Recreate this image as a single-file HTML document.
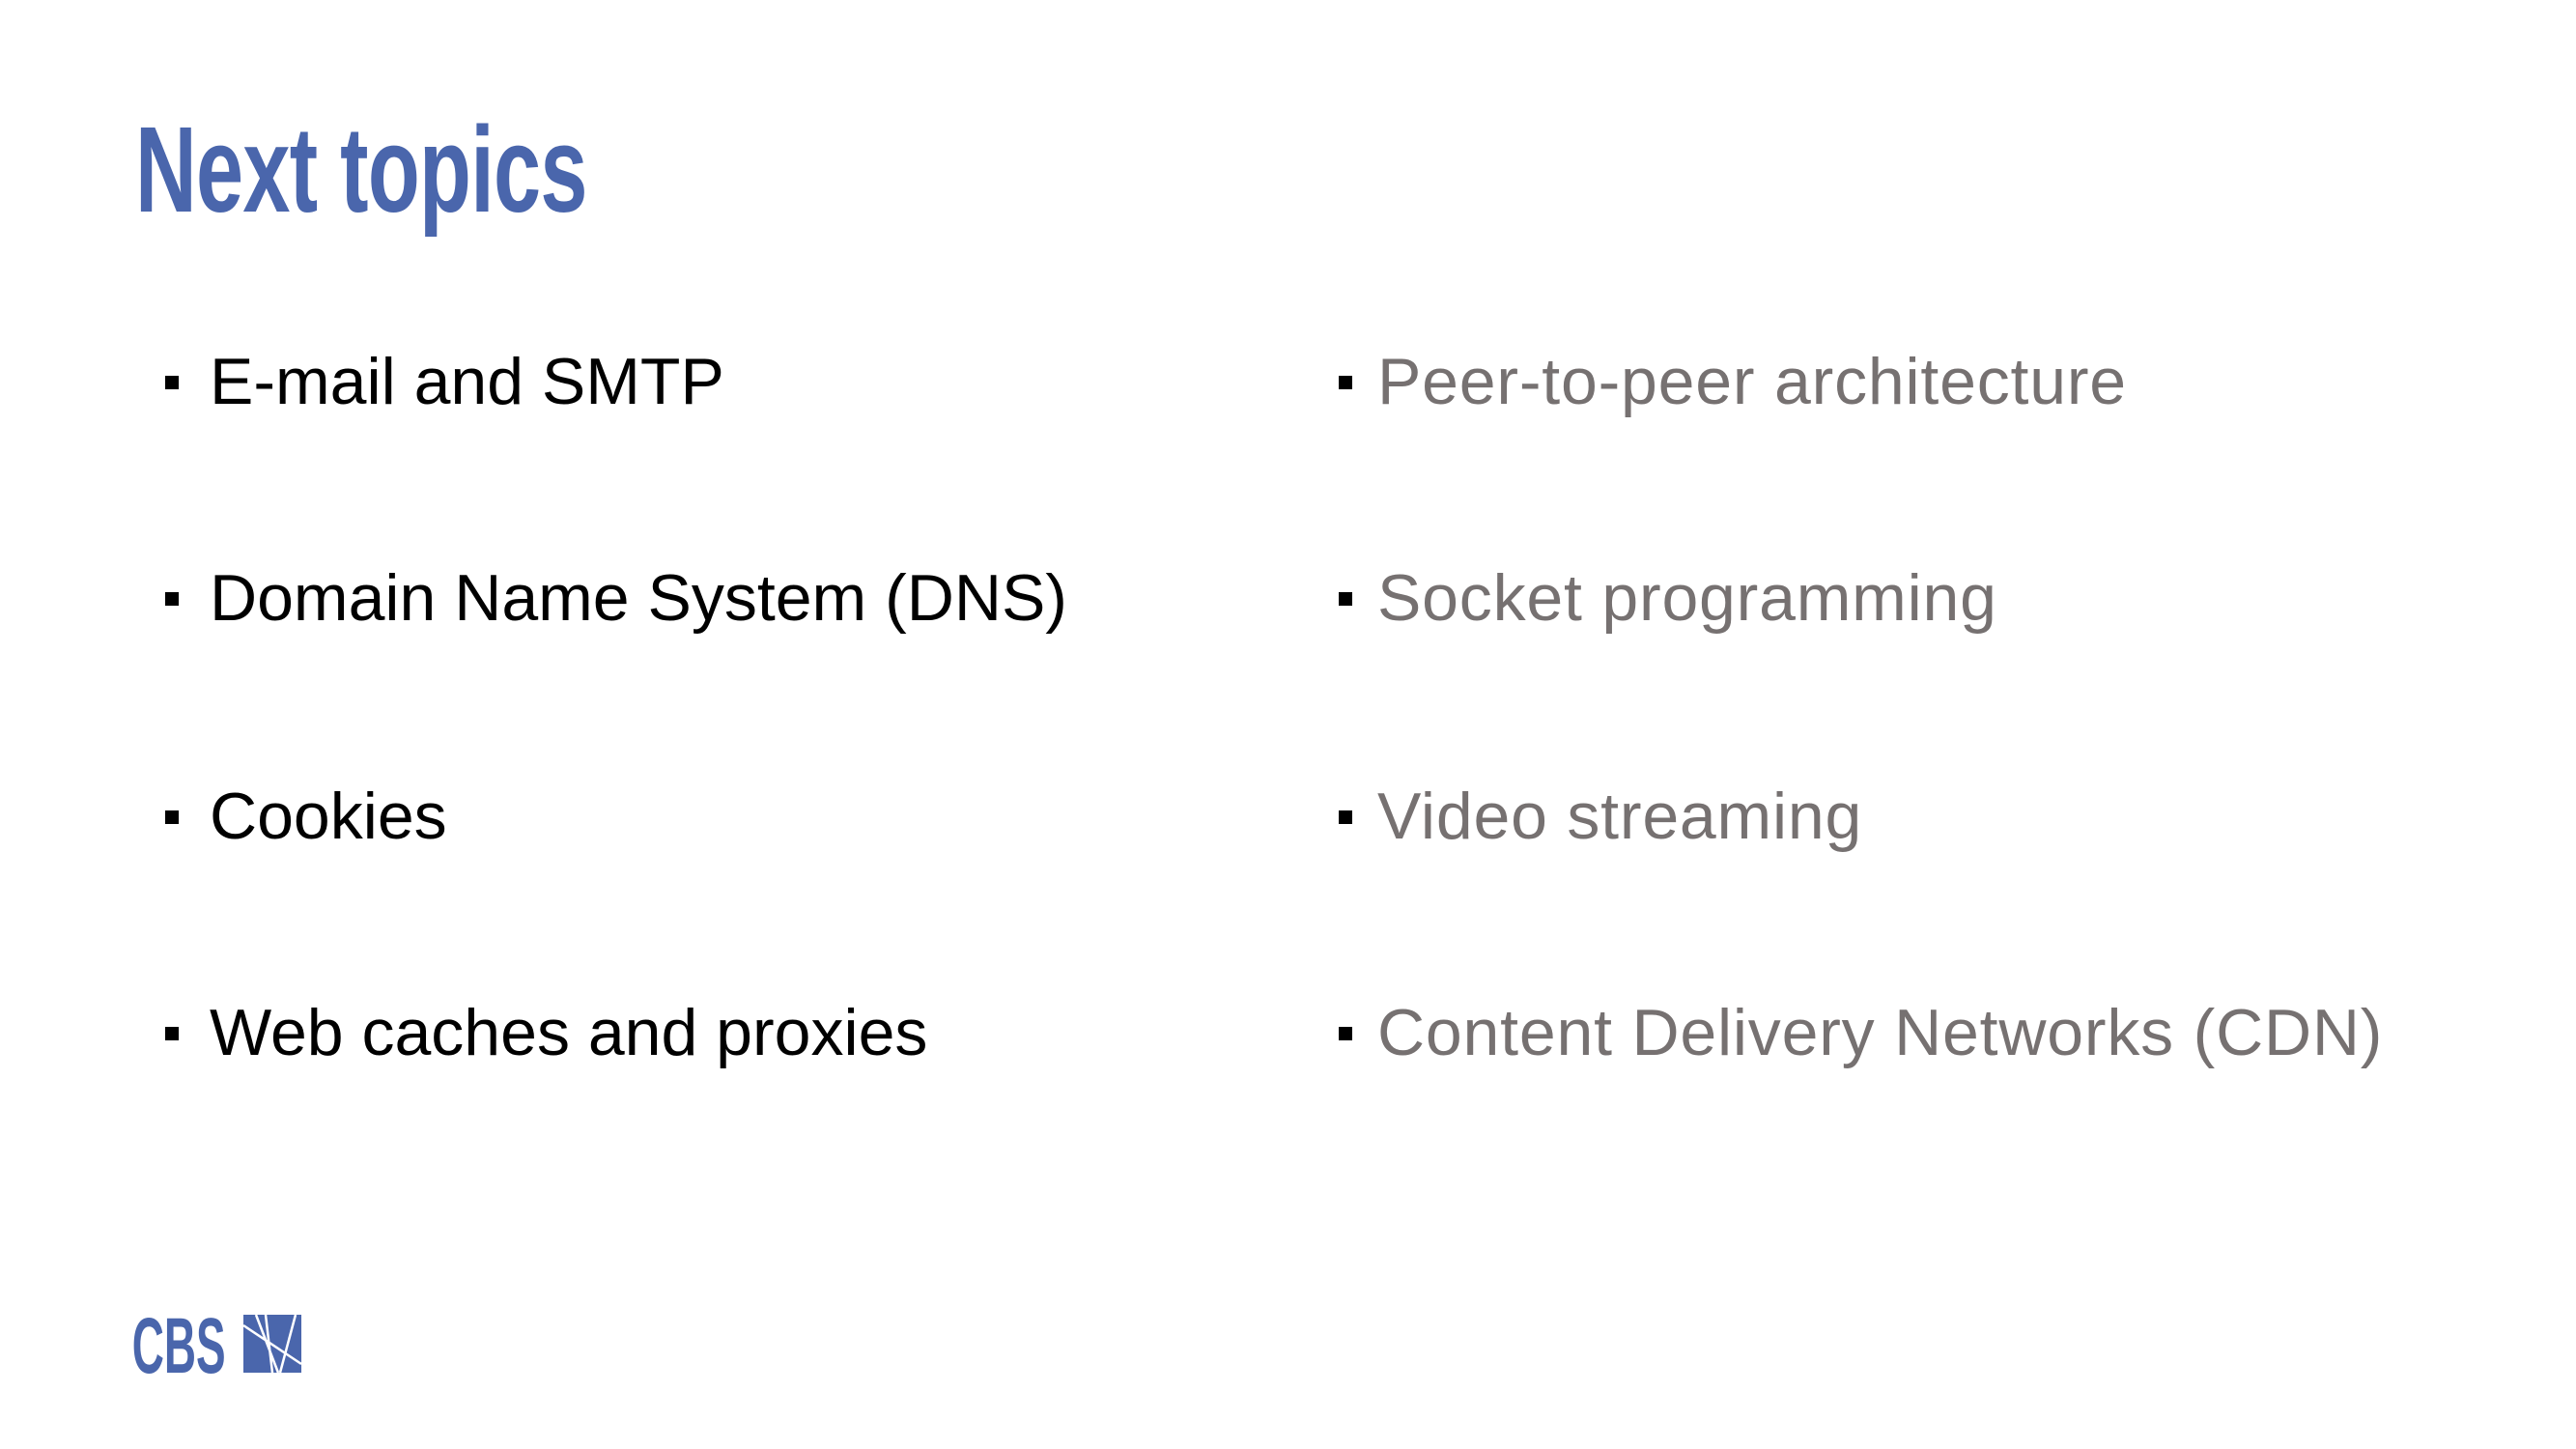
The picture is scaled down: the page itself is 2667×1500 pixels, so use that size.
<!DOCTYPE html>
<html><head><meta charset="utf-8"><style>
html,body{margin:0;padding:0;background:#fff;}
body{width:2667px;height:1500px;position:relative;overflow:hidden;font-family:"Liberation Sans",sans-serif;}
.t{position:absolute;left:140px;top:113px;font-size:126px;font-weight:bold;color:#4a66ac;transform:scaleX(0.7);transform-origin:left top;letter-spacing:-1px;line-height:1;}
.i{position:absolute;font-size:68px;line-height:1;white-space:nowrap;letter-spacing:0;}
.i:before{content:"";position:absolute;left:-46px;top:28px;width:14px;height:14px;background:currentColor;}
.l{left:217px;color:#000;}
.r{left:1426px;color:#767171;letter-spacing:0.8px;}
.r:before{background:#000;left:-40px;}
</style></head><body>
<div class="t">Next topics</div>
<div class="i l" style="top:361px">E-mail and SMTP</div>
<div class="i l" style="top:585px">Domain Name System (DNS)</div>
<div class="i l" style="top:811px">Cookies</div>
<div class="i l" style="top:1035px">Web caches and proxies</div>
<div class="i r" style="top:361px">Peer-to-peer architecture</div>
<div class="i r" style="top:585px">Socket programming</div>
<div class="i r" style="top:811px">Video streaming</div>
<div class="i r" style="top:1035px">Content Delivery Networks (CDN)</div>
<svg style="position:absolute;left:130px;top:1350px" width="200" height="80" viewBox="0 0 200 80">
<text x="12" y="71" font-family="Liberation Sans" font-weight="bold" font-size="82" fill="#4a66ac" transform="scale(0.56,1)">CBS</text>
<rect x="122" y="11" width="60" height="60" fill="#4a66ac"/>
<path d="M122 22 L182 62 M135 11 L158 71 M145 11 L152 71 M176 11 L160 71" stroke="#fff" stroke-width="2.5" fill="none"/>
</svg>
</body></html>
